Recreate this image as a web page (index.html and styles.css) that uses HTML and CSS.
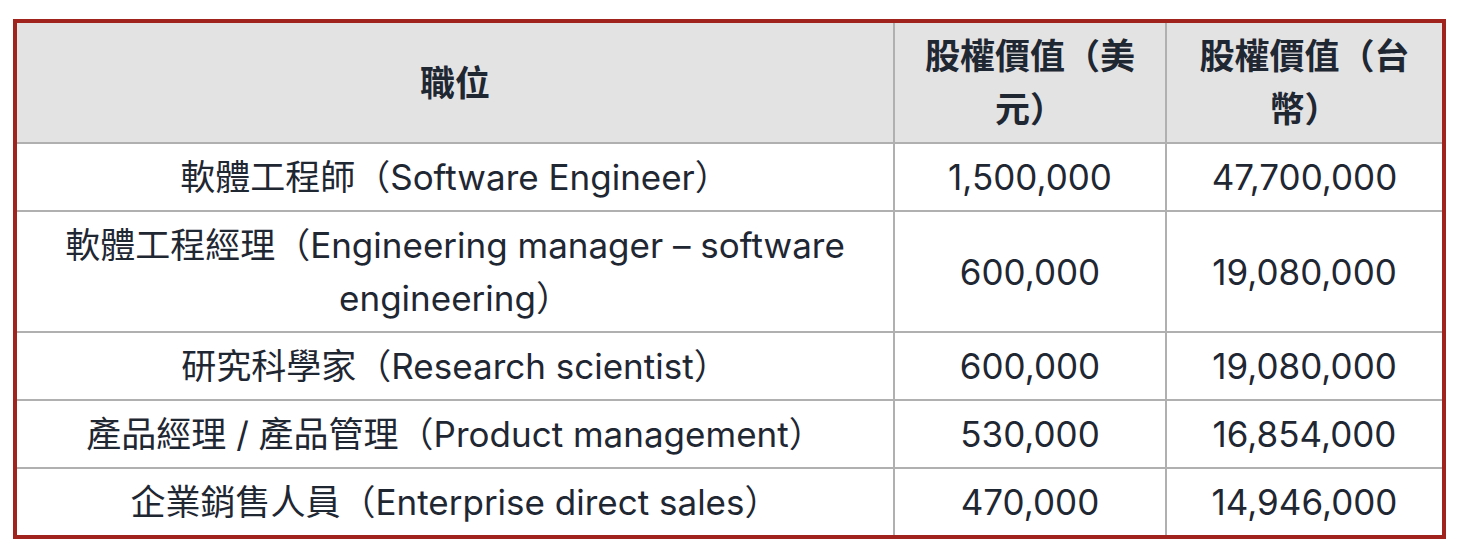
FILE: index.html
```html
<!DOCTYPE html>
<html lang="zh-Hant">
<head>
<meta charset="utf-8">
<title>股權價值</title>
<link rel="stylesheet" href="styles.css">
</head>
<body>
<table class="equity">
  <thead>
    <tr>
      <th class="col-role">職位</th>
      <th class="col-usd">股權價值（美元）</th>
      <th class="col-twd">股權價值（台幣）</th>
    </tr>
  </thead>
  <tbody>
    <tr>
      <td>軟體工程師（Software Engineer）</td>
      <td>1,500,000</td>
      <td>47,700,000</td>
    </tr>
    <tr>
      <td>軟體工程經理（Engineering manager – software engineering）</td>
      <td>600,000</td>
      <td>19,080,000</td>
    </tr>
    <tr>
      <td>研究科學家（Research scientist）</td>
      <td>600,000</td>
      <td>19,080,000</td>
    </tr>
    <tr>
      <td>產品經理 / 產品管理（Product management）</td>
      <td>530,000</td>
      <td>16,854,000</td>
    </tr>
    <tr>
      <td>企業銷售人員（Enterprise direct sales）</td>
      <td>470,000</td>
      <td>14,946,000</td>
    </tr>
  </tbody>
</table>
</body>
</html>
```

FILE: styles.css
```css
html, body {
  margin: 0;
  padding: 0;
  background: #ffffff;
}

body {
  font-family: Inter, "Noto Sans CJK TC", "Noto Sans", sans-serif;
  color: #1f2733;
}

.equity {
  margin: 19px 0 0 13px;
  width: 1433px;
  box-sizing: border-box;
  table-layout: fixed;
  border-collapse: separate;
  border-spacing: 0;
  border: 4px solid #a1231e;
  font-size: 35px;
  line-height: 53px;
}

.equity th,
.equity td {
  box-sizing: border-box;
  padding: 7px 16px 6px;
  text-align: center;
  vertical-align: middle;
  border-right: 2px solid #b0b0b0;
  border-bottom: 2px solid #b0b0b0;
}

.equity th:last-child,
.equity td:last-child {
  border-right: none;
}

.equity tbody tr:last-child td {
  border-bottom: none;
}

.equity th {
  background: #e3e3e3;
  font-weight: 700;
}

.col-role { width: 878px; }
.col-usd { width: 272px; }
.col-twd { width: 275px; }
```
